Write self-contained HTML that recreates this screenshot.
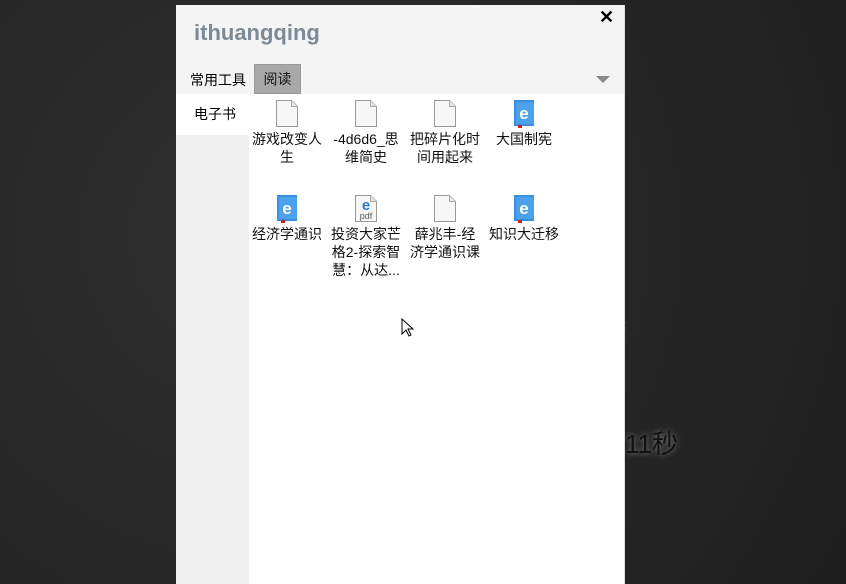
<!DOCTYPE html>
<html><head><meta charset="utf-8"><style>
*{margin:0;padding:0;box-sizing:border-box}
body{width:846px;height:584px;overflow:hidden;background:#2a2a2a;font-family:"Liberation Sans","Noto Sans CJK SC",sans-serif;position:relative}
.bg{position:absolute;inset:0;background:radial-gradient(circle at 30% 40%,#303030 0,#252525 60%,#1e1e1e 100%)}
.panel{position:absolute;left:176px;top:5px;width:449px;height:579px;background:#f4f4f4;border-right:1px solid #ddd}
.title{position:absolute;left:18px;top:15px;font-size:22px;font-weight:bold;color:#7d8a96}
.close{position:absolute;left:423px;top:2px;font-size:18px;font-weight:bold;color:#000}
.tab1{position:absolute;left:14px;top:65px;font-size:14px;color:#000}
.tab2{position:absolute;left:78px;top:59px;width:47px;height:30px;background:#a8a8a8;border:1px solid #999;font-size:14px;line-height:28px;text-align:center;color:#111}
.arrow{position:absolute;left:420px;top:71px;width:0;height:0;border-left:7px solid transparent;border-right:7px solid transparent;border-top:7px solid #888}
.side{position:absolute;left:0;top:89px;width:73px;height:490px;background:#f0f0f0}
.side .on{height:41px;background:#fff;font-size:14px;line-height:41px;padding-left:18px}
.content{position:absolute;left:73px;top:89px;width:375px;height:490px;background:#fff}
.it{position:absolute;width:72px;text-align:center;font-size:14px;line-height:18px;color:#111;word-break:break-all}
.it svg{display:block;margin:0 auto 2px}
.ov{position:absolute;font-size:26px;color:#111;text-shadow:0 0 6px #888}
</style></head><body>
<div class="bg"></div>
<div class="ov" style="left:625px;top:424px">11秒</div>
<div class="ov" style="left:622px;top:318px;font-size:20px">:</div>
<div class="panel">
<div class="title">ithuangqing</div>
<div class="close">✕</div>
<div class="tab1">常用工具</div>
<div class="tab2">阅读</div>
<div class="arrow"></div>
<div class="side"><div class="on">电子书</div></div>
<div class="content"></div>
</div>
<svg width="0" height="0" style="position:absolute"><defs>
<g id="doc"><path d="M1.5 .5h15l6 6v20h-21z" fill="#f7f7f7" stroke="#999"/><path d="M16.5 .5v6h6" fill="#e6e6e6" stroke="#aaa"/></g>
<g id="eb"><rect x="2" y="0" width="20" height="26" fill="#3a8ee0"/><rect x="4" y="2" width="18" height="22" fill="#4ba2ea"/><text x="12" y="19" font-size="17" font-weight="bold" fill="#fff" text-anchor="middle" font-family="Liberation Sans">e</text><rect x="6" y="25" width="4" height="3" fill="#c22"/></g>
</defs></svg>
<div class="it" style="left:251px;top:100px"><svg width="24" height="28"><use href="#doc"/></svg>游戏改变人生</div>
<div class="it" style="left:330px;top:100px"><svg width="24" height="28"><use href="#doc"/></svg>-4d6d6_思维简史</div>
<div class="it" style="left:409px;top:100px"><svg width="24" height="28"><use href="#doc"/></svg>把碎片化时间用起来</div>
<div class="it" style="left:488px;top:100px"><svg width="24" height="28"><use href="#eb"/></svg>大国制宪</div>
<div class="it" style="left:251px;top:195px"><svg width="24" height="28"><use href="#eb"/></svg>经济学通识</div>
<div class="it" style="left:330px;top:195px"><svg width="24" height="28"><use href="#doc"/><text x="12" y="15" font-size="15" font-weight="bold" fill="#2a7fd4" text-anchor="middle" font-family="Liberation Sans">e</text><text x="12" y="24" font-size="9" fill="#555" text-anchor="middle" font-family="Liberation Sans">pdf</text></svg>投资大家芒格2-探索智慧：从达...</div>
<div class="it" style="left:409px;top:195px"><svg width="24" height="28"><use href="#doc"/></svg>薛兆丰-经济学通识课</div>
<div class="it" style="left:488px;top:195px"><svg width="24" height="28"><use href="#eb"/></svg>知识大迁移</div>
<svg style="position:absolute;left:401px;top:318px" width="13" height="19"><path d="M1 1v15l4-4 3 6 2-1-3-6h5z" fill="#fff" stroke="#000"/></svg>
</body></html>
